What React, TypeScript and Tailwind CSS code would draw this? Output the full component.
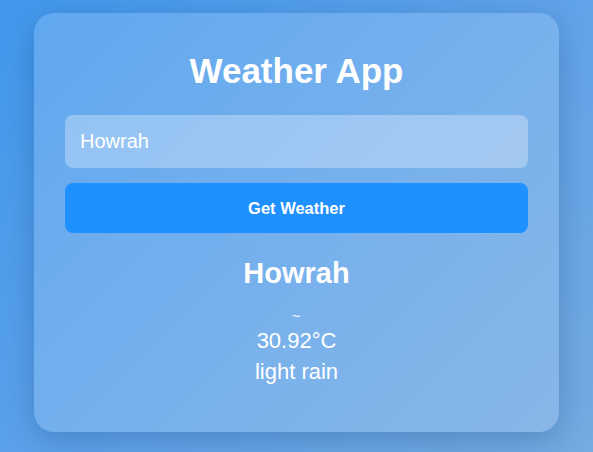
import React, { useState } from 'react';

const App: React.FC = () => {
  const [city, setCity] = useState('Howrah');

  return (
    <div
      className="min-h-screen w-full bg-[linear-gradient(135deg,#4298ee_0%,#5ea3ea_50%,#76abe2_100%)] pt-[13px] pb-[20px]"
      style={{ fontFamily: '"Liberation Sans", Arial, sans-serif' }}
    >
      <div className="mx-auto w-[525px] rounded-[20px] bg-white/15 shadow-[0_8px_32px_rgba(0,40,90,0.25)] px-[31px] pt-[37.5px] pb-[48px] text-white text-center">
        <h1 className="text-[35px] font-bold leading-[1.15]">Weather App</h1>

        <div className="mt-[24.5px] flex flex-col gap-[15px]">
          <input
            value={city}
            onChange={(e) => setCity(e.target.value)}
            className="w-full h-[53px] rounded-[8px] bg-white/30 px-[15px] text-[20px] text-white outline-none placeholder:text-white/80"
          />
          <button className="w-full h-[50px] rounded-[8px] bg-[#1e90ff] text-[16.5px] font-bold text-white">
            Get Weather
          </button>
        </div>

        {/* Result */}
        <div className="mt-[24px] flex flex-col items-center">
          <h2 className="text-[29px] font-bold leading-[1.15]">Howrah</h2>
          <div className="mt-[17px] text-[15px] leading-[15px]">~</div>
          <p className="mt-[5px] text-[22px] leading-[1.15]">30.92°C</p>
          <p className="mt-[6px] text-[22px] leading-[1.15]">light rain</p>
        </div>
      </div>
    </div>
  );
};

export default App;
